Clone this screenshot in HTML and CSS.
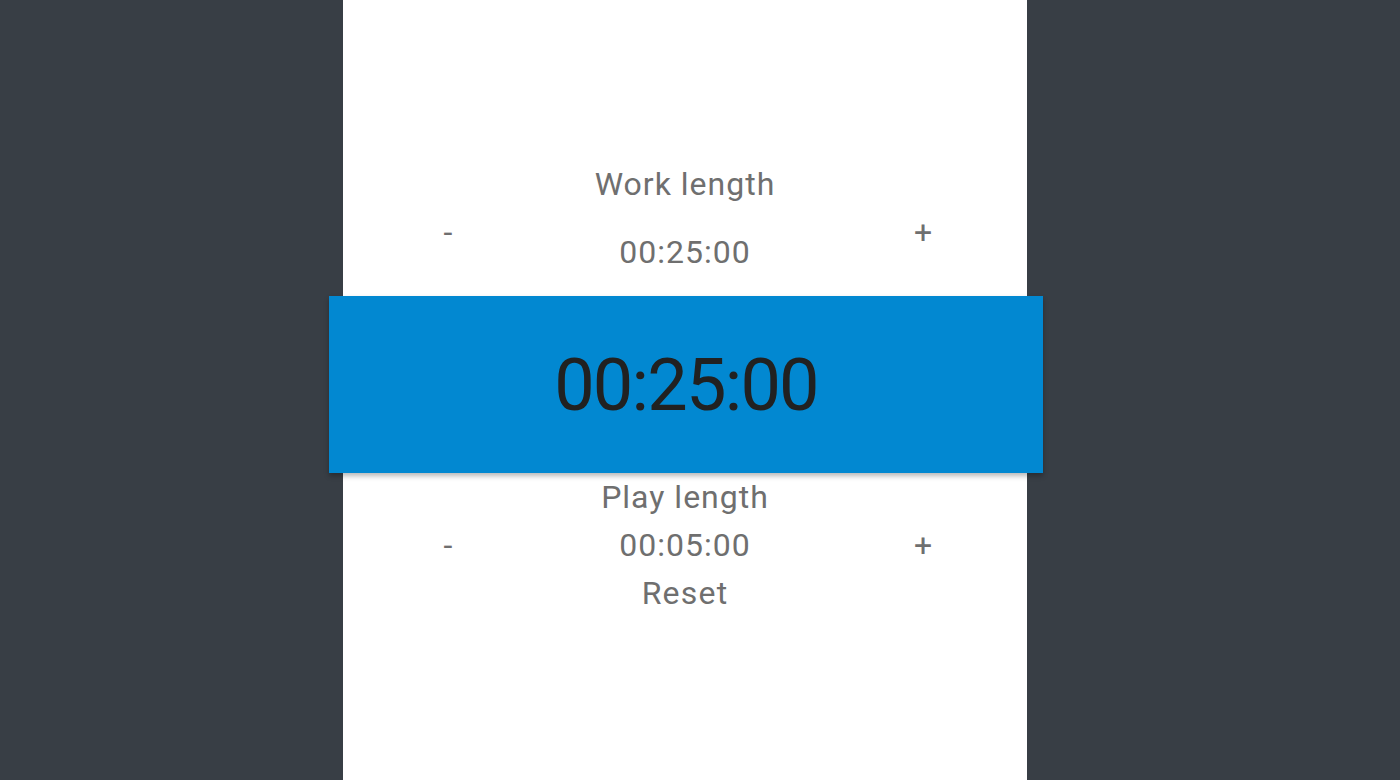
FILE: index.html
```html
<!DOCTYPE html>
<html lang="en">
<head>
<meta charset="utf-8">
<title>Pomodoro</title>
<link rel="stylesheet" href="styles.css">
</head>
<body>
<div class="page">
  <main class="column">
    <section class="setting setting--work">
      <h2 class="setting__title">Work length</h2>
      <div class="setting__row">
        <button class="btn">-</button>
        <div class="setting__value setting__value--low">00:25:00</div>
        <button class="btn btn--plus">+</button>
      </div>
    </section>
    <div class="timer">
      <span class="timer__time">00:25:00</span>
    </div>
    <section class="setting setting--play">
      <h2 class="setting__title">Play length</h2>
      <div class="setting__row">
        <button class="btn">-</button>
        <div class="setting__value">00:05:00</div>
        <button class="btn btn--plus">+</button>
      </div>
    </section>
    <button class="reset">Reset</button>
  </main>
</div>
</body>
</html>
```

FILE: styles.css
```css
html, body {
  margin: 0;
  padding: 0;
  height: 100%;
}

body {
  background: #383e45;
  font-family: Roboto, "Liberation Sans", Arial, sans-serif;
  overflow: hidden;
}

.page {
  display: flex;
  justify-content: center;
  padding-right: 30px;
  height: 100%;
}

.column {
  width: 684px;
  height: 100%;
  background: #ffffff;
  display: flex;
  flex-direction: column;
  color: #6f6f6f;
  font-size: 32px;
  line-height: 48px;
  letter-spacing: 1px;
  text-align: center;
}

.setting__title {
  margin: 0;
  font-size: 32px;
  font-weight: 400;
  line-height: 48px;
}

.setting--work {
  padding-top: 160px;
}

.setting__row {
  display: grid;
  grid-template-columns: 210px 1fr 210px;
  align-items: start;
}

.btn {
  background: none;
  border: 0;
  padding: 0;
  margin: 0;
  font: inherit;
  letter-spacing: 0;
  color: inherit;
  line-height: 48px;
  text-align: center;
  cursor: pointer;
}

.btn--plus {
  padding-left: 2px;
}

.setting__value--low {
  margin-top: 20px;
}

.timer {
  margin: 20px -16px 0 -14px;
  height: 177px;
  box-sizing: border-box;
  padding-top: 2px;
  background: #0288d1;
  box-shadow: 0 3px 5px rgba(0, 0, 0, 0.28);
  display: flex;
  align-items: center;
  justify-content: center;
  position: relative;
}

.timer__time {
  font-size: 72px;
  line-height: 72px;
  letter-spacing: -1.75px;
  color: #212121;
}

.reset {
  align-self: center;
  background: none;
  border: 0;
  padding: 0 8px;
  margin: 0;
  font: inherit;
  letter-spacing: 1.2px;
  color: inherit;
  line-height: 48px;
  cursor: pointer;
}
```
